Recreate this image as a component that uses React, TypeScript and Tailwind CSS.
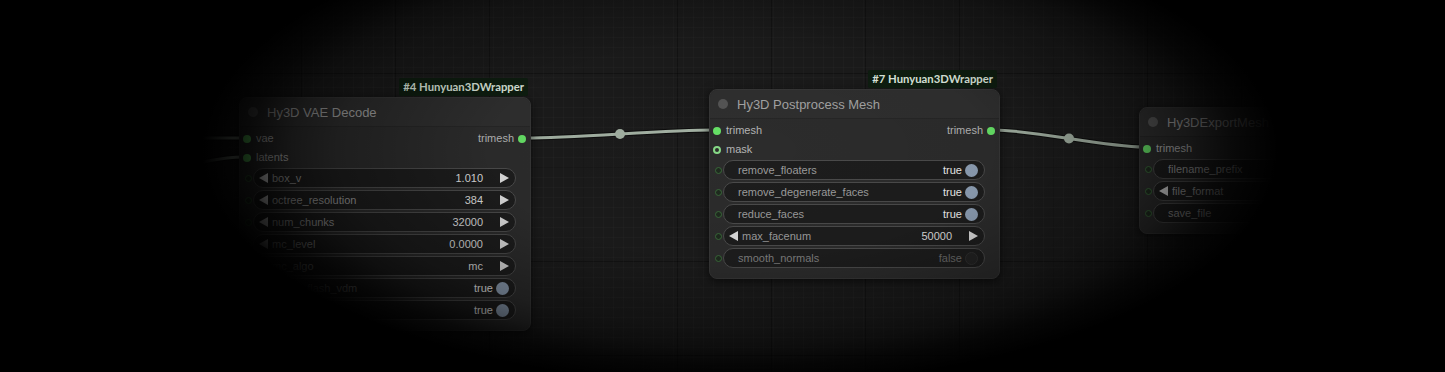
import React from "react";

type W =
  | { k: "num"; label: string; value: string }
  | { k: "combo"; label: string; value: string }
  | { k: "toggle"; label: string; on: boolean }
  | { k: "text"; label: string; value: string };

type Slot = { label: string; hollow?: boolean };

function TriLeft() {
  return (
    <svg width="9" height="10" viewBox="0 0 9 10" className="shrink-0">
      <polygon points="9,0 9,10 0,5" fill="#dcdcdc" />
    </svg>
  );
}
function TriRight() {
  return (
    <svg width="9" height="10" viewBox="0 0 9 10" className="shrink-0">
      <polygon points="0,0 0,10 9,5" fill="#dcdcdc" />
    </svg>
  );
}

function Widget({ w }: { w: W }) {
  let inner: React.ReactNode = null;
  if (w.k === "num" || w.k === "combo") {
    inner = (
      <div className="flex-1 h-full rounded-full border border-[#4b4b4b] bg-[#1d1d1d] flex items-center pl-[5px] pr-[6px]">
        <TriLeft />
        <span className="ml-[4px] text-[#9c9c9c]">{w.label}</span>
        <span className="ml-auto text-[#dedede]">{w.value}</span>
        <span className="ml-[17px] flex">
          <TriRight />
        </span>
      </div>
    );
  } else if (w.k === "toggle") {
    inner = (
      <div className="flex-1 h-full rounded-full border border-[#4b4b4b] bg-[#1d1d1d] flex items-center pl-[14px] pr-[6px]">
        <span className={w.on ? "text-[#9c9c9c]" : "text-[#7c7c7c]"}>{w.label}</span>
        <span className={"ml-auto " + (w.on ? "text-[#ececec]" : "text-[#6c6c6c]")}>
          {w.on ? "true" : "false"}
        </span>
        <span
          className={
            "ml-[3px] w-[13px] h-[13px] rounded-full " +
            (w.on ? "bg-[#8d9eb3]" : "bg-[#232323] border border-[#303030]")
          }
        />
      </div>
    );
  } else {
    inner = (
      <div className="flex-1 h-full rounded-full border border-[#4b4b4b] bg-[#1d1d1d] flex items-center pl-[14px] pr-[14px]">
        <span className="text-[#9c9c9c]">{w.label}</span>
        <span className="ml-auto text-[#dedede]">{w.value}</span>
      </div>
    );
  }
  return (
    <div className="flex items-center h-[20px]">
      <div className="pl-[5px] w-[12px] flex">
        <span className="w-[7px] h-[7px] rounded-full border-[1.5px] border-[#3a6a3a] bg-[#1f2a1f]" />
      </div>
      <div className="ml-[1px] mr-[14px] flex-1 h-full flex">{inner}</div>
    </div>
  );
}

function Node({
  title,
  badge,
  inputs,
  output,
  widgets,
  pos,
}: {
  title: string;
  badge?: string;
  inputs: Slot[];
  output?: string;
  widgets: W[];
  pos: string;
}) {
  return (
    <div
      className={
        "absolute rounded-[8px] bg-[#2c2c2c] border border-[#363636] shadow-[0_2px_10px_rgba(0,0,0,0.6)] font-['Liberation_Sans',Arial,sans-serif] text-[11px] leading-none " +
        pos
      }
    >
      {badge && (
        <div className="absolute -top-[20px] right-[2px] h-[18px] px-[4px] flex items-center bg-[#0e1d10] rounded-[2px] text-[11.3px] font-bold text-[#dfe9df] font-['Lato',sans-serif] whitespace-nowrap">
          {badge}
        </div>
      )}
      <div className="h-[29px] flex items-center border-b border-[#262626] bg-[#2f2f2f] rounded-t-[8px]">
        <span className="ml-[8px] w-[10px] h-[10px] rounded-full bg-[#555555]" />
        <span className="ml-[9px] text-[13px] text-[#a3a3a3]">{title}</span>
      </div>
      <div className="pt-[2px] pb-[10px]">
        {inputs.map((s, i) => (
          <div key={s.label} className="h-[19px] flex items-center">
            <span
              className={
                "ml-[3px] w-[8px] h-[8px] rounded-full " +
                (s.hollow ? "border-2 border-[#86d986] bg-[#2c2c2c]" : "bg-[#66e066]")
              }
            />
            <span className="ml-[5px] text-[#b4b4b4]">{s.label}</span>
            {i === 0 && output && (
              <>
                <span className="ml-auto text-[#b4b4b4]">{output}</span>
                <span className="ml-[4px] mr-[4px] w-[8px] h-[8px] rounded-full bg-[#66e066]" />
              </>
            )}
          </div>
        ))}
        <div className="pt-[1px] flex flex-col gap-[2px]">
          {widgets.map((w) => (
            <Widget key={w.label} w={w} />
          ))}
        </div>
      </div>
    </div>
  );
}

export default function App() {
  return (
    <div className="relative w-[1445px] h-[372px] overflow-hidden bg-[#1b1b1b] bg-[image:linear-gradient(to_right,rgba(255,255,255,0.02)_1px,transparent_1px),linear-gradient(to_bottom,rgba(255,255,255,0.02)_1px,transparent_1px),linear-gradient(to_right,rgba(0,0,0,0.3)_1px,transparent_1px),linear-gradient(to_bottom,rgba(0,0,0,0.3)_1px,transparent_1px)] bg-[size:10px_10px,10px_10px,94px_94px,94px_94px] bg-[position:3px_7px,3px_7px,19px_73px,19px_73px]">
      <svg className="absolute inset-0" width="1445" height="372">
        <g fill="none" strokeLinecap="round">
          <path d="M -40 138 L 243 138" stroke="#0d0d0d" strokeWidth="5" />
          <path d="M -40 138 L 243 138" stroke="#9fae9f" strokeWidth="3" />
          <path d="M 243 157 C 190 157, 120 190, 20 230" stroke="#0d0d0d" strokeWidth="5" />
          <path d="M 243 157 C 190 157, 120 190, 20 230" stroke="#9fae9f" strokeWidth="3" />
          <path d="M 526 138 C 575 138, 665 130, 713 130" stroke="#0d0d0d" strokeWidth="5" />
          <path d="M 526 138 C 575 138, 665 130, 713 130" stroke="#a3b1a3" strokeWidth="3" />
          <path d="M 995 130 C 1032 130, 1106 147, 1143 147" stroke="#0d0d0d" strokeWidth="5" />
          <path d="M 995 130 C 1032 130, 1106 147, 1143 147" stroke="#a3b1a3" strokeWidth="3" />
        </g>
        <circle cx="620" cy="134" r="5" fill="#a3b1a3" />
        <circle cx="1069" cy="138.5" r="5" fill="#a3b1a3" />
      </svg>

      <Node
        pos="left-[239px] top-[97px] w-[292px]"
        title="Hy3D VAE Decode"
        badge="#4 Hunyuan3DWrapper"
        inputs={[{ label: "vae" }, { label: "latents" }]}
        output="trimesh"
        widgets={[
          { k: "num", label: "box_v", value: "1.010" },
          { k: "num", label: "octree_resolution", value: "384" },
          { k: "num", label: "num_chunks", value: "32000" },
          { k: "num", label: "mc_level", value: "0.0000" },
          { k: "combo", label: "mc_algo", value: "mc" },
          { k: "toggle", label: "enable_flash_vdm", on: true },
          { k: "toggle", label: "force_offload", on: true },
        ]}
      />
      <Node
        pos="left-[709px] top-[89px] w-[291px]"
        title="Hy3D Postprocess Mesh"
        badge="#7 Hunyuan3DWrapper"
        inputs={[{ label: "trimesh" }, { label: "mask", hollow: true }]}
        output="trimesh"
        widgets={[
          { k: "toggle", label: "remove_floaters", on: true },
          { k: "toggle", label: "remove_degenerate_faces", on: true },
          { k: "toggle", label: "reduce_faces", on: true },
          { k: "num", label: "max_facenum", value: "50000" },
          { k: "toggle", label: "smooth_normals", on: false },
        ]}
      />
      <Node
        pos="left-[1139px] top-[107px] w-[292px]"
        title="Hy3DExportMesh"
        inputs={[{ label: "trimesh" }]}
        widgets={[
          { k: "text", label: "filename_prefix", value: "3D/Hy3D" },
          { k: "combo", label: "file_format", value: "glb" },
          { k: "toggle", label: "save_file", on: true },
        ]}
      />

      <div className="pointer-events-none absolute inset-0 bg-[radial-gradient(ellipse_560px_245px_at_740px_150px,rgba(0,0,0,0)_0%,rgba(0,0,0,0.05)_45%,rgba(0,0,0,0.18)_58%,rgba(0,0,0,0.32)_72%,rgba(0,0,0,0.5)_80%,rgba(0,0,0,0.8)_88%,#000_96%)]" />
    </div>
  );
}
